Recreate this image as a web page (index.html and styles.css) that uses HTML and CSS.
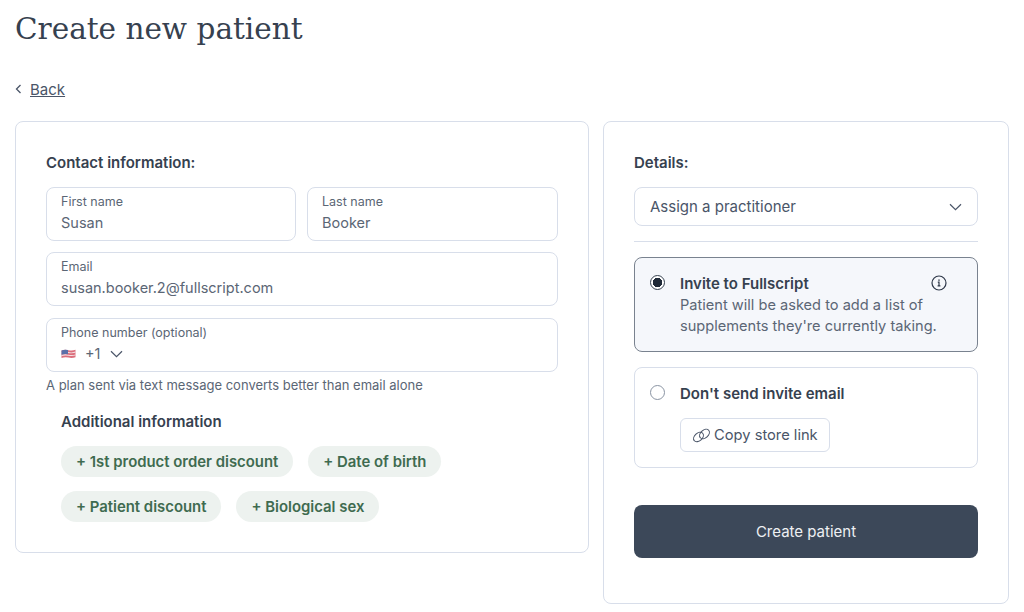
FILE: index.html
```html
<!DOCTYPE html>
<html lang="en">
<head>
  <meta charset="UTF-8">
  <meta name="viewport" content="width=device-width, initial-scale=1.0">
  <title>Create new patient</title>
  <link rel="stylesheet" href="styles.css">
</head>
<body>
  <h1>Create new patient</h1>

  <a class="back-link" href="#">
    <svg width="8" height="10" viewBox="0 0 8 10" fill="none" stroke="#4a5568" stroke-width="1.3"><path d="M5.5 1 1.5 5l4 4"/></svg>
    <span>Back</span>
  </a>

  <div class="columns">
    <!-- Contact card -->
    <div class="card card-contact">
      <h2>Contact information:</h2>
      <div class="field-row">
        <div class="field">
          <label>First name</label>
          <div class="value">Susan</div>
        </div>
        <div class="field">
          <label>Last name</label>
          <div class="value">Booker</div>
        </div>
      </div>
      <div class="field">
        <label>Email</label>
        <div class="value">susan.booker.2@fullscript.com</div>
      </div>
      <div class="field">
        <label>Phone number (optional)</label>
        <div class="value phone">
          <svg class="flag" width="15" height="10" viewBox="0 0 15 10">
            <path d="M.5 1.5Q4 .2 7.5 1.2T14.5.8v7.4Q11 9.6 7.5 8.6T.5 9z" fill="#dc6f7c"/>
            <path d="M.5 3Q4 2 7.5 3t7-.4v1.2q-3.500.8-7 .2t-7 .3zM.5 5.700Q4 4.900 7.500 5.700t7-.3v1.200q-3.500.8-7 .1t-7 .3z" fill="#f3dfe3"/>
            <path d="M.5 1.500Q3.500.4 7 1.100V5.300Q3.500 4.800.5 5.700z" fill="#5a6fa8"/>
          </svg>
          <span>+1</span>
          <svg width="13" height="8" viewBox="0 0 13 8" fill="none" stroke="#4a5568" stroke-width="1.2"><path d="M1 1.200 6.500 6.600 12 1.200"/></svg>
        </div>
      </div>
      <p class="hint">A plan sent via text message converts better than email alone</p>
      <div class="additional">
        <h3>Additional information</h3>
        <div class="chips">
          <span class="chip">+ 1st product order discount</span>
          <span class="chip">+ Date of birth</span>
          <span class="chip">+ Patient discount</span>
          <span class="chip">+ Biological sex</span>
        </div>
      </div>
    </div>

    <!-- Details card -->
    <div class="card card-details">
      <h2>Details:</h2>
      <div class="select">
        <span>Assign a practitioner</span>
        <svg width="13" height="8" viewBox="0 0 13 8" fill="none" stroke="#4a5568" stroke-width="1.2"><path d="M1 1.200 6.500 6.600 12 1.200"/></svg>
      </div>
      <hr class="divider">
      <div class="option option-active">
        <span class="radio radio-on"></span>
        <div class="option-body">
          <div class="option-title">
            <strong>Invite to Fullscript</strong>
            <svg class="info-icon" width="16" height="16" viewBox="0 0 16 16" fill="none" stroke="#2d3748" stroke-width="1.2"><circle cx="8" cy="8" r="7"/><path d="M6.800 7.200H8v3.600M6.600 10.900h2.800"/><path d="M8 4.400v1.300" stroke-width="1.500"/></svg>
          </div>
          <p>Patient will be asked to add a list of supplements they're currently taking.</p>
        </div>
      </div>
      <div class="option">
        <span class="radio"></span>
        <div class="option-body">
          <div class="option-title"><strong>Don't send invite email</strong></div>
          <button class="copy-btn" type="button">
            <svg width="19" height="15" viewBox="0 0 19 15" fill="none" stroke="#4a5568" stroke-width="1.1"><ellipse cx="6.500" cy="9" rx="5.600" ry="3.800" transform="rotate(-42 6.500 9)"/><ellipse cx="12.500" cy="6" rx="5.600" ry="3.800" transform="rotate(-42 12.500 6)"/></svg>
            Copy store link
          </button>
        </div>
      </div>
      <button class="submit-btn" type="button">Create patient</button>
    </div>
  </div>
</body>
</html>
```

FILE: styles.css
```css
/* General Styling */
body {
  margin: 0;
  padding: 0 15px;
  background-color: #fff;
  color: #4a5568;
  font-family: "Inter", "Noto Sans", sans-serif;
  font-size: 14.5px;
  overflow: hidden;
}
h1 {
  margin: 0;
  padding-top: 9px;
  height: 74px;
  box-sizing: border-box;
  color: #36414f;
  font-family: "DejaVu Serif", serif;
  font-size: 29.5px;
  line-height: 40px;
  font-weight: 400;
}

/* Back link */
.back-link {
  display: flex;
  align-items: center;
  gap: 7px;
  height: 18px;
  margin-top: 6px;
  color: #4a5568;
  font-size: 15px;
}
.back-link span {
  text-decoration: underline;
}

/* Cards */
.columns {
  display: flex;
  align-items: flex-start;
  gap: 14px;
  margin-top: 23px;
}
.card {
  box-sizing: border-box;
  padding: 30px;
  border: 1px solid #d8deea;
  border-radius: 8px;
}
.card-contact {
  width: 574px;
  height: 432px;
}
.card-details {
  width: 406px;
  height: 483px;
}
.card h2 {
  margin: 1px 0 14px;
  color: #36414f;
  font-size: 15px;
  line-height: 20px;
  font-weight: 600;
}

/* Form fields */
.field-row {
  display: flex;
  gap: 11px;
  width: 512px;
  margin-bottom: -1px;
}
.field {
  box-sizing: border-box;
  width: 512px;
  height: 54px;
  margin-top: 12px;
  padding: 6px 14px;
  border: 1px solid #d8deea;
  border-radius: 8px;
}
.field-row .field {
  width: 251px;
  margin-top: 0;
}
.field-row .field:first-child {
  width: 250px;
}
.field label {
  display: block;
  font-size: 12.5px;
  line-height: 16px;
  color: #5b6675;
}
.value {
  margin-top: 1px;
  font-size: 14.5px;
  line-height: 24px;
  color: #5b6675;
}
.phone {
  display: flex;
  align-items: center;
  gap: 9px;
}
.hint {
  margin: 4px 0 0;
  font-size: 13px;
  line-height: 18px;
  color: #5b6675;
}

/* Additional information */
.additional {
  padding-left: 15px;
  margin-top: 18px;
}
.additional h3 {
  margin: 0 0 14px;
  color: #36414f;
  font-size: 15px;
  line-height: 20px;
  font-weight: 600;
}
.chips {
  display: flex;
  flex-wrap: wrap;
  width: 420px;
  gap: 14px 15px;
}
.chip {
  height: 31px;
  padding: 0 15px;
  border-radius: 16px;
  background-color: #edf2ef;
  color: #3f6b50;
  font-size: 14.9px;
  line-height: 33px;
  font-weight: 600;
}

/* Details */
.select {
  display: flex;
  align-items: center;
  justify-content: space-between;
  box-sizing: border-box;
  width: 344px;
  height: 39px;
  padding: 0 15px;
  border: 1px solid #d8deea;
  border-radius: 8px;
  font-size: 15px;
}
.divider {
  width: 344px;
  height: 1px;
  margin: 15px 0;
  border: 0;
  background-color: #d8deea;
}
.option {
  display: flex;
  gap: 15px;
  box-sizing: border-box;
  width: 344px;
  height: 101px;
  margin-top: 15px;
  padding: 16px 15px;
  border: 1px solid #d8deea;
  border-radius: 8px;
}
.option-active {
  height: 95px;
  margin-top: 0;
  border-color: #79828f;
  background-color: #f5f7fb;
}
.radio {
  flex: none;
  box-sizing: border-box;
  width: 15px;
  height: 15px;
  margin-top: 1px;
  border: 1px solid #8a94a3;
  border-radius: 50%;
  background-color: #fff;
}
.radio-on {
  border-color: #36414f;
  background: radial-gradient(circle, #1f2937 0 4.5px, #fff 5px);
}
.option-body {
  flex: 1;
}
.option-title {
  display: flex;
  justify-content: space-between;
  width: 267px;
  height: 20px;
  color: #36414f;
  font-size: 15px;
  line-height: 19px;
}
.option-title strong {
  font-weight: 600;
}
.info-icon {
  margin-top: 1px;
}
.option p {
  margin: 1px 0 0;
  line-height: 21px;
  font-size: 14.6px;
  color: #5b6675;
}
.copy-btn {
  display: flex;
  align-items: center;
  gap: 3px;
  box-sizing: border-box;
  width: 150px;
  height: 34px;
  margin-top: 14px;
  padding: 0 11px;
  border: 1px solid #d8deea;
  border-radius: 6px;
  background-color: #fff;
  color: #4a5568;
  font-family: inherit;
  font-size: 14.7px;
}
.submit-btn {
  display: block;
  width: 344px;
  height: 53px;
  margin-top: 37px;
  border: 0;
  border-radius: 8px;
  background-color: #3c4859;
  color: #eef0f3;
  font-family: inherit;
  font-size: 15px;
}
```
